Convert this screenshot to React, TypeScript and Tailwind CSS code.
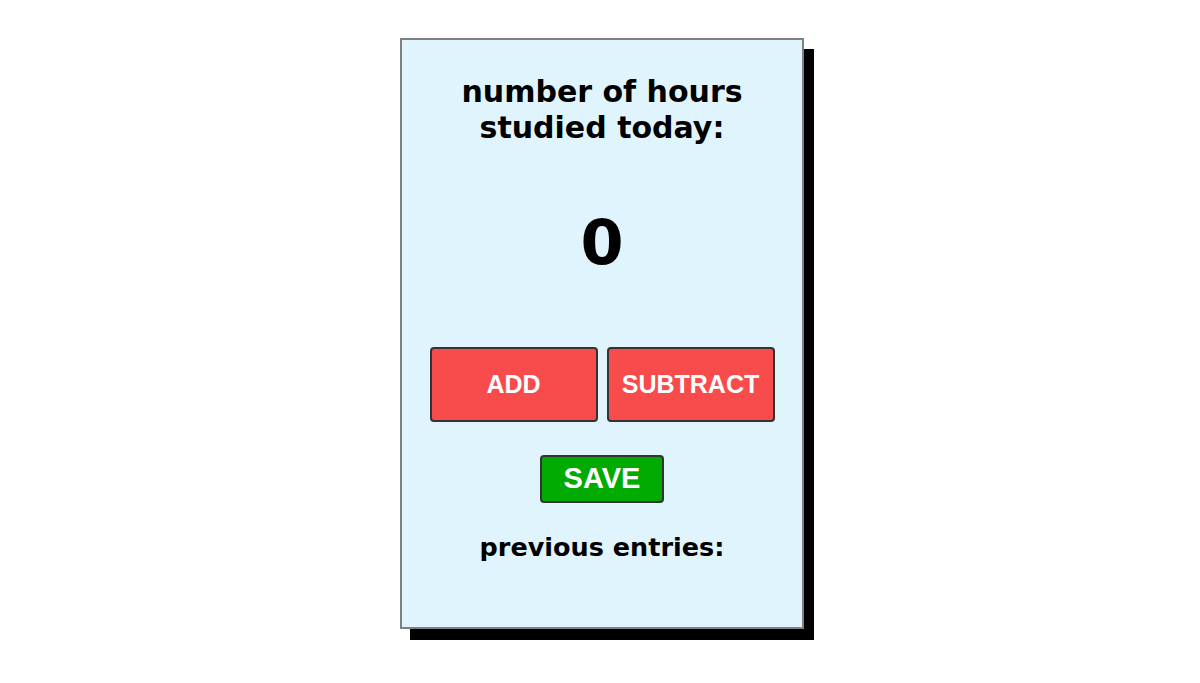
export default function App() {
  return (
    <div className="min-h-[683px] w-full bg-white pl-[4px] pt-[38px]">
      {/* Study hours card */}
      <div className="mx-auto flex h-[591px] w-[404px] flex-col items-center border-2 border-[#808080] bg-[#e0f4fd] pt-[34px] shadow-[10px_11px_0_0_#000] font-['Verdana','DejaVu_Sans',sans-serif]">
        <h1 className="text-center text-[30px] font-bold leading-[36px] text-black">
          number of hours
          <br />
          studied today:
        </h1>

        <div className="mt-[62px] text-[62px] font-bold leading-[70px] text-black">0</div>

        <div className="mt-[69px] flex gap-[9px] font-['Liberation_Sans',Arial,sans-serif]">
          <button className="h-[75px] w-[168px] rounded-[4px] border-2 border-[#333] bg-[#f74b4c] text-[25px] font-bold text-white">
            ADD
          </button>
          <button className="h-[75px] w-[168px] rounded-[4px] border-2 border-[#333] bg-[#f74b4c] text-[25px] font-bold text-white">
            SUBTRACT
          </button>
        </div>

        <button className="mt-[33px] h-[48px] w-[124px] rounded-[4px] border-2 border-[#333] bg-[#00aa00] font-['Liberation_Sans',Arial,sans-serif] text-[29px] font-bold text-white">
          SAVE
        </button>

        <h2 className="mt-[29px] text-center text-[25.5px] font-bold leading-[30px] text-black">
          previous entries:
        </h2>
      </div>
    </div>
  );
}
